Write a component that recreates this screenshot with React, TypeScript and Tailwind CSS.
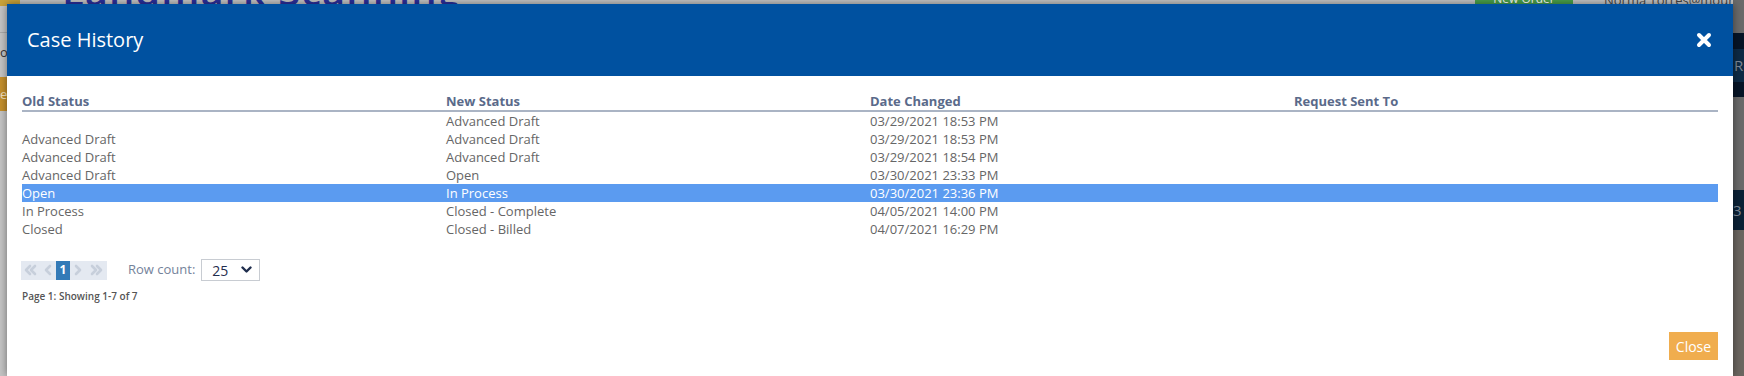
import React from "react";

const rows = [
  ["", "Advanced Draft", "03/29/2021 18:53 PM", ""],
  ["Advanced Draft", "Advanced Draft", "03/29/2021 18:53 PM", ""],
  ["Advanced Draft", "Advanced Draft", "03/29/2021 18:54 PM", ""],
  ["Advanced Draft", "Open", "03/30/2021 23:33 PM", ""],
  ["Open", "In Process", "03/30/2021 23:36 PM", ""],
  ["In Process", "Closed - Complete", "04/05/2021 14:00 PM", ""],
  ["Closed", "Closed - Billed", "04/07/2021 16:29 PM", ""],
];

function Chev({ dir, double }: { dir: "l" | "r"; double?: boolean }) {
  const one = dir === "l" ? "M6 2 L2 6 L6 10" : "M2 2 L6 6 L2 10";
  const two = dir === "l" ? "M11 2 L7 6 L11 10" : "M7 2 L11 6 L7 10";
  return (
    <svg width={double ? 13 : 8} height="12" viewBox={double ? "0 0 13 12" : "0 0 8 12"} fill="none">
      <path d={one} stroke="#c7cfdb" strokeWidth="2.6" strokeLinecap="round" strokeLinejoin="round" />
      {double && <path d={two} stroke="#c7cfdb" strokeWidth="2.6" strokeLinecap="round" strokeLinejoin="round" />}
    </svg>
  );
}

export default function App() {
  return (
    <div
      className="relative w-[1744px] h-[376px] overflow-hidden bg-[#c4c4c4]"
      style={{ fontFamily: '"Open Sans", "Noto Sans", sans-serif' }}
    >
      {/* dimmed page behind */}
      <div className="absolute left-0 top-0 w-[1744px] h-[376px]">
        <div className="absolute left-0 top-[-2px] w-[20px] h-[8px] bg-[#c9a23a]" />
        <div className="absolute left-[62px] top-[-29px] text-[40px] leading-none text-[#2a2f9c] font-semibold tracking-wide">
          Landmark Scanning
        </div>
        <div className="absolute left-[1475px] top-[-6px] w-[98px] h-[10px] bg-[#4aa04a] text-[12px] text-white text-center leading-[10px]">
          New Order
        </div>
        <div className="absolute left-[1604px] top-[-9px] text-[13px] text-[#444]">Norma Torres@mount</div>
        <div className="absolute left-0 top-[32px] w-[8px] h-[1px] bg-[#a9a9a9]" />
        <div className="absolute left-0 top-[46px] text-[13px] text-[#333] leading-none">o</div>
        <div className="absolute left-0 top-[77px] w-[8px] h-[34px] bg-[#c48f2c] text-[13px] text-[#f3e2c0] leading-[34px]">e</div>
        <div className="absolute left-[1733px] top-0 w-[11px] h-[376px] bg-[#6a6a6a]" />
        <div className="absolute left-[1733px] top-[33px] w-[11px] h-[16px] bg-[#061426]" />
        <div className="absolute left-[1733px] top-[49px] w-[11px] h-[33px] bg-[#0d2a45] text-[15px] text-[#7d8896] leading-[33px] pl-[1px]">
          Re
        </div>
        <div className="absolute left-[1733px] top-[82px] w-[11px] h-[15px] bg-[#061426]" />
        <div className="absolute left-[1733px] top-[190px] w-[11px] h-[40px] bg-[#0b2236] text-[15px] text-[#7d8896] leading-[40px]">
          3
        </div>
        <div className="absolute left-[1733px] top-[230px] w-[11px] h-[146px] bg-[#6b6660]" />
      </div>

      {/* modal */}
      <div className="absolute left-[7px] top-[4px] w-[1726px] h-[372px] bg-white flex flex-col shadow-[0_0_8px_rgba(0,0,0,0.45)]">
        <div className="h-[72px] bg-[#0051a0] flex items-center justify-between pl-[20px] pr-[21px]">
          <div className="text-[20px] text-white leading-none">Case History</div>
          <svg width="16" height="16" viewBox="0 0 16 16">
            <path d="M3 3 L13 13 M13 3 L3 13" stroke="white" strokeWidth="4" strokeLinecap="round" />
          </svg>
        </div>

        <div className="flex-1 flex flex-col px-[15px] pt-[16px]">
          <div className="grid grid-cols-4 border-b-2 border-[#aab4c4] h-[20px]">
            {["Old Status", "New Status", "Date Changed", "Request Sent To"].map((h) => (
              <div key={h} className="text-[13px] font-bold text-[#5a6a8a] leading-[18px]">
                {h}
              </div>
            ))}
          </div>
          {rows.map((r, i) => {
            const sel = i === 4;
            return (
              <div
                key={i}
                className={
                  sel
                    ? "grid grid-cols-4 h-[18px] bg-[#5b9bf0] text-white"
                    : "grid grid-cols-4 h-[18px] text-[#666666]"
                }
              >
                {r.map((c, j) => (
                  <div key={j} className="text-[13px] leading-[18px] whitespace-nowrap">
                    {c}
                  </div>
                ))}
              </div>
            );
          })}

          <div className="flex items-center mt-[21px] h-[22px]">
            <div className="flex items-stretch h-[19px] bg-[#e4e9f1] ml-[-1px]">
              <div className="w-[19px] flex items-center justify-center"><Chev dir="l" double /></div>
              <div className="w-[16px] flex items-center justify-center"><Chev dir="l" /></div>
              <div className="w-[14px] bg-[#337ab7] text-white text-[12px] font-bold flex items-center justify-center">1</div>
              <div className="w-[16px] flex items-center justify-center"><Chev dir="r" /></div>
              <div className="w-[21px] flex items-center justify-center"><Chev dir="r" double /></div>
            </div>
            <div className="ml-[21px] text-[13px] text-[#74829a]">Row count:</div>
            <div className="ml-[6px] w-[59px] h-[22px] border border-[#c8ccd2] flex items-center justify-between pl-[10px] pr-[7px]">
              <span className="text-[14px] text-[#1f2d4d]">25</span>
              <svg width="11" height="8" viewBox="0 0 11 8">
                <path d="M1.5 1.5 L5.5 5.5 L9.5 1.5" stroke="#1f2d4d" strokeWidth="2.4" fill="none" strokeLinecap="round" strokeLinejoin="round" />
              </svg>
            </div>
          </div>
          <div className="mt-[8px] text-[10px] font-semibold text-[#555] leading-[14px]">Page 1: Showing 1-7 of 7</div>
        </div>

        <div className="flex justify-end px-[15px] pb-[16px]">
          <div className="w-[49px] h-[28px] bg-[#f0ad4e] text-white text-[14px] flex items-center justify-center">Close</div>
        </div>
      </div>
    </div>
  );
}
